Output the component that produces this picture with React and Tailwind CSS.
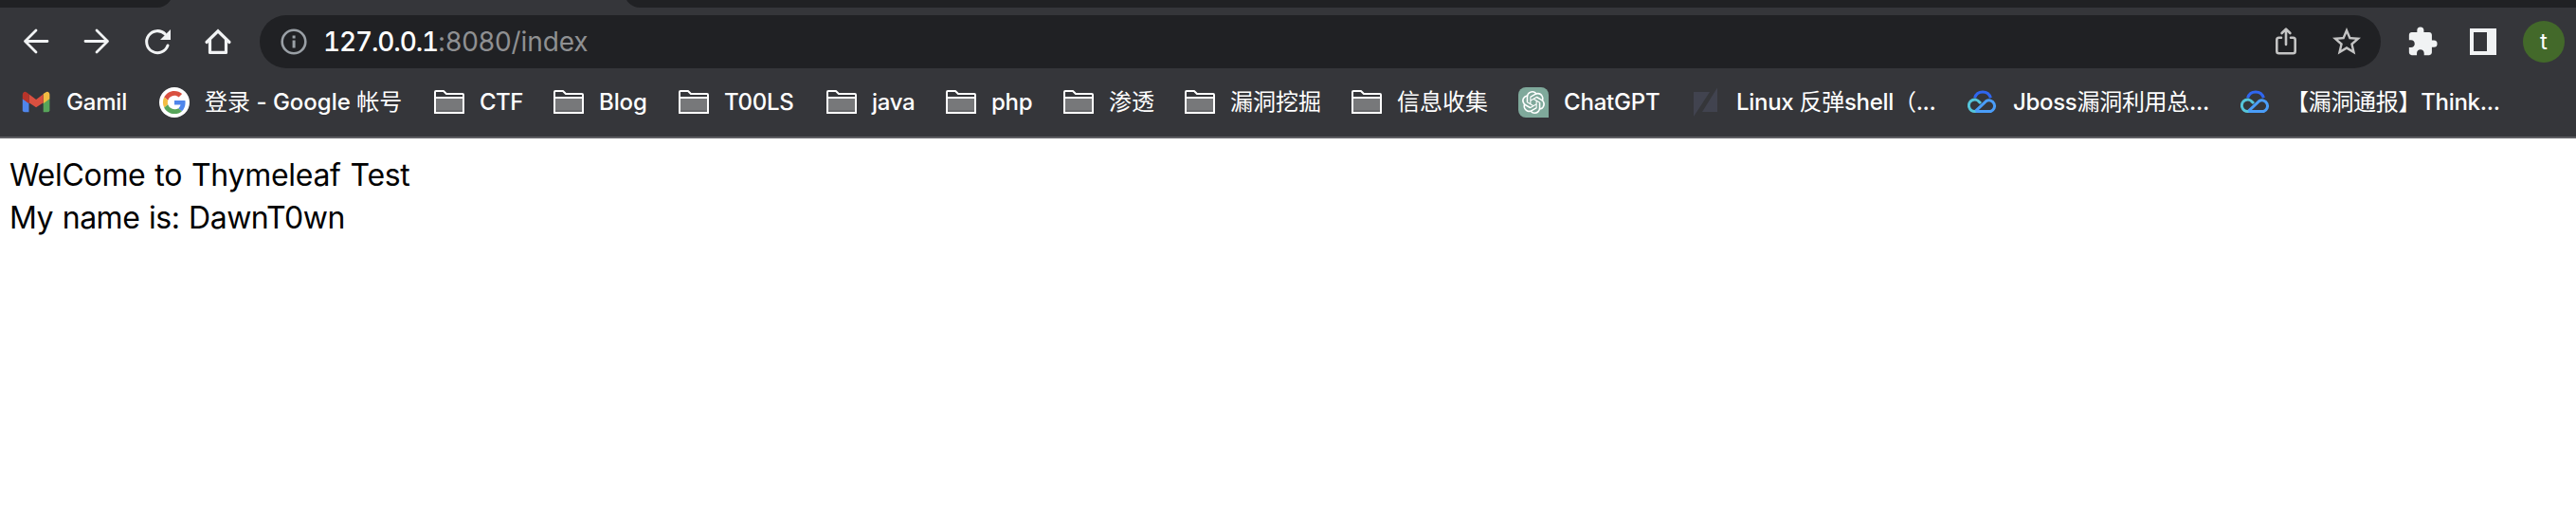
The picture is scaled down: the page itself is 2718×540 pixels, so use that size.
import React from "react";
import { SiOpenai } from "react-icons/si";
import { MdExtension, MdStarBorder } from "react-icons/md";

function BackIcon() {
  return (
    <svg viewBox="0 0 32 32" className="size-8" fill="none" stroke="#f1f3f4" strokeWidth="2.8" strokeLinecap="round" strokeLinejoin="round">
      <path d="M28 15.5H4.6M16 4L4.5 15.5L16 27" />
    </svg>
  );
}

function ForwardIcon() {
  return (
    <svg viewBox="0 0 32 32" className="size-8" fill="none" stroke="#f1f3f4" strokeWidth="2.8" strokeLinecap="round" strokeLinejoin="round">
      <path d="M4 15.5H27.4M16 4L27.5 15.5L16 27" />
    </svg>
  );
}

function ReloadIcon() {
  return (
    <svg viewBox="0 0 32 32" className="size-8" fill="none">
      <path d="M27 20A11.5 11.5 0 1 1 24.2 7.9" stroke="#f1f3f4" strokeWidth="3" strokeLinecap="round" />
      <path d="M30 3V14H19Z" fill="#f1f3f4" />
    </svg>
  );
}

function HomeIcon() {
  return (
    <svg viewBox="0 0 32 32" className="size-8" fill="none" stroke="#f1f3f4" strokeWidth="3.2">
      <path d="M4 16.5L16 4.8L28 16.5" strokeLinejoin="miter" strokeLinecap="round" />
      <path d="M7.5 14V27.4H24.5V14" strokeLinejoin="round" />
    </svg>
  );
}

function InfoIcon() {
  return (
    <svg viewBox="0 0 28 28" className="size-7" fill="none">
      <circle cx="14" cy="14" r="12.3" stroke="#9aa0a6" strokeWidth="2.6" />
      <path d="M12.6 7.6h3v3h-3zM12.6 12.6h3v8h-3z" fill="#9aa0a6" />
    </svg>
  );
}

function ShareIcon() {
  return (
    <svg viewBox="0 0 32 32" className="size-8" fill="none" stroke="#c4c4c4" strokeWidth="2.6" strokeLinecap="round">
      <path d="M11 11.8H8.5Q6.3 11.8 6.3 14V26Q6.3 28.2 8.5 28.2H23.5Q25.7 28.2 25.7 26V14Q25.7 11.8 23.5 11.8H21" />
      <path d="M16 19V3M11.6 7L16 2.6L20.4 7" strokeLinejoin="round" />
    </svg>
  );
}

function PanelIcon() {
  return (
    <svg viewBox="0 0 28 28" className="size-7">
      <path fillRule="evenodd" d="M0 0H28V28H0ZM4 4V24H18V4Z" fill="#f1f3f4" />
    </svg>
  );
}

function GmailIcon() {
  return (
    <svg viewBox="0 0 32 32" className="size-8">
      <path d="M1.8 12L8.5 16.5V26.3H4Q1.8 26.3 1.8 24.2Z" fill="#4f86ec" />
      <path d="M30.4 12L23.7 16.5V26.3H28.2Q30.4 26.3 30.4 24.2Z" fill="#57a55a" />
      <path d="M23.7 7L26 5.5Q28.5 3.8 30 6.2Q30.4 7 30.4 8V12.3L23.7 17.2Z" fill="#f2bd42" />
      <path d="M8.5 7.2L16.1 12.9L23.7 7.2V16.2L16.1 21.2L8.5 16.2Z" fill="#d95040" />
      <path d="M1.8 12.3V8Q1.8 6 3.3 5.1Q4.8 4.4 6.2 5.5L8.5 7.2V17.2Z" fill="#b8342a" />
    </svg>
  );
}

function GoogleIcon() {
  return (
    <svg viewBox="0 0 32 32" className="size-8">
      <circle cx="16" cy="16" r="16" fill="white" />
      <g transform="translate(3.9 3.9) scale(0.504)">
        <path fill="#d95040" d="M24 9.5c3.54 0 6.71 1.22 9.21 3.6l6.85-6.85C35.9 2.38 30.47 0 24 0 14.62 0 6.51 5.38 2.56 13.22l7.98 6.19C12.43 13.72 17.74 9.5 24 9.5z" />
        <path fill="#4f86ec" d="M46.98 24.55c0-1.57-.15-3.09-.38-4.55H24v9.02h12.94c-.58 2.96-2.26 5.48-4.78 7.18l7.73 6c4.51-4.18 7.09-10.36 7.09-17.65z" />
        <path fill="#f2bd42" d="M10.53 28.59c-.48-1.45-.76-2.99-.76-4.59s.27-3.14.76-4.59l-7.98-6.19C.92 16.46 0 20.12 0 24c0 3.88.92 7.54 2.56 10.78l7.97-6.19z" />
        <path fill="#57a55a" d="M24 48c6.48 0 11.93-2.13 15.89-5.81l-7.73-6c-2.15 1.45-4.92 2.3-8.16 2.3-6.26 0-11.57-4.22-13.47-9.91l-7.98 6.19C6.51 42.62 14.62 48 24 48z" />
      </g>
    </svg>
  );
}

function FolderIcon() {
  return (
    <svg viewBox="0 0 32 32" className="size-8" stroke="white" strokeWidth="2" strokeLinejoin="round">
      <path d="M1 11H31V27H1Z" fill="#77787a" />
      <path d="M2 25H30" stroke="#66676a" />
      <path d="M1 27V5Q1 4 2 4H10L13 7H30Q31 7 31 8V27Z" fill="none" />
    </svg>
  );
}

function ChatIcon() {
  return (
    <span className="flex size-8 items-center justify-center rounded-l-lg rounded-tr-lg bg-[#7fa99b]">
      <SiOpenai className="size-6 text-white" />
    </span>
  );
}

function SlashIcon() {
  return (
    <svg viewBox="0 0 32 32" className="size-8" fill="#41434f">
      <path d="M3 5H20L3 31ZM28 .5V26H12Z" />
    </svg>
  );
}

function CloudIcon() {
  return (
    <svg viewBox="0 0 32 32" className="size-8" fill="none" strokeWidth="3">
      <path d="M7.6 11.2A8.8 8.8 0 0 1 24.4 11.2" stroke="#2f66f0" />
      <path d="M14 17L12.7 15.8A6.2 6.2 0 1 0 8.2 25.5H10" stroke="#55c5da" />
      <path d="M8.5 25.5H24.5A6 6 0 1 0 19.6 14.6L8.5 25.2" stroke="#4a9df8" />
    </svg>
  );
}

const bookmarks = [
  { label: "Gamil", Icon: GmailIcon, box: "w-[146px]", track: "tracking-[-0.2px]" },
  { label: "登录 - Google 帐号", Icon: GoogleIcon, box: "w-[290px]", track: "tracking-[0px]" },
  { label: "CTF", Icon: FolderIcon, box: "w-[126px]", track: "tracking-[-0.5px]" },
  { label: "Blog", Icon: FolderIcon, box: "w-[132px]", track: "tracking-[-0.1px]" },
  { label: "T00LS", Icon: FolderIcon, box: "w-[156px]", track: "tracking-[-0.3px]" },
  { label: "java", Icon: FolderIcon, box: "w-[126px]", track: "tracking-[-0.3px]" },
  { label: "php", Icon: FolderIcon, box: "w-[124px]", track: "tracking-[-0.3px]" },
  { label: "渗透", Icon: FolderIcon, box: "w-[128px]", track: "tracking-[0px]" },
  { label: "漏洞挖掘", Icon: FolderIcon, box: "w-[176px]", track: "tracking-[0px]" },
  { label: "信息收集", Icon: FolderIcon, box: "w-[176px]", track: "tracking-[0px]" },
  { label: "ChatGPT", Icon: ChatIcon, box: "w-[182px]", track: "tracking-[-0.2px]" },
  { label: "Linux 反弹shell（...", Icon: SlashIcon, box: "w-[292px]", track: "tracking-[-0.3px]" },
  { label: "Jboss漏洞利用总...", Icon: CloudIcon, box: "w-[288px]", track: "tracking-[-0.3px]" },
  { label: "【漏洞通报】Think...", Icon: CloudIcon, box: "w-[290px]", track: "tracking-[-0.3px]" },
];

// Chinese runs are set one weight lighter than the Latin ones.
function Label({ text }) {
  return text.split(/([\u3000-\u9fff\uff00-\uffef]+)/).map((run, i) =>
    i % 2 ? <span key={i} className="font-normal">{run}</span> : run
  );
}

export default function App() {
  return (
    <div className="flex h-[540px] w-[2718px] flex-col overflow-hidden bg-white font-['Inter','Noto_Sans_CJK_SC',sans-serif]">
      <header className="flex h-[146px] flex-col border-b-2 border-[#5f5f64] bg-[#35363a]">
        <div className="flex h-2 justify-between overflow-hidden">
          <div className="flex h-2 w-[182px] items-end overflow-hidden">
            <div className="h-8 w-[182px] shrink-0 rounded-br-[16px] bg-[#202124]" />
          </div>
          <div className="flex h-2 w-[2059px] items-end overflow-hidden">
            <div className="h-8 w-[2059px] shrink-0 rounded-bl-[16px] bg-[#202124]" />
          </div>
        </div>
        <nav className="mt-2 flex h-14 items-center pl-[22px]">
          <div className="flex w-[252px] shrink-0 items-center gap-8">
            <BackIcon />
            <ForwardIcon />
            <ReloadIcon />
            <HomeIcon />
          </div>
          <div className="flex h-14 w-[2238px] shrink-0 items-center rounded-full bg-[#202124] pl-[22px] pr-[18px]">
            <InfoIcon />
            <div className="ml-[17px] flex-1 whitespace-nowrap text-[28px] leading-none text-[#8f9092]">
              <span className="font-medium tabular-nums tracking-[-1.15px] text-white">127.0.0.1</span>
              <span className="tracking-[-0.1px]">:8080/index</span>
            </div>
            <ShareIcon />
            <MdStarBorder className="ml-[30px] size-[36px] text-[#c4c4c4]" />
          </div>
          <MdExtension className="ml-[27px] size-[34px] shrink-0 text-[#f1f3f4]" />
          <div className="ml-[33px] shrink-0"><PanelIcon /></div>
          <div className="ml-7 flex size-11 shrink-0 items-center justify-center rounded-full bg-[#43692a] text-2xl leading-none text-white">t</div>
        </nav>
        <div className="flex h-[72px] items-center pl-[22px]">
          {bookmarks.map(({ label, Icon, box, track }) => (
            <div key={label} className={`flex shrink-0 items-center gap-4 ${box}`}>
              <Icon />
              <span className={`whitespace-nowrap text-2xl leading-8 font-medium text-white ${track}`}>
                <Label text={label} />
              </span>
            </div>
          ))}
        </div>
      </header>
      <main className="px-2.5 pt-[16px] text-[32px] leading-[45px] text-black">
        <p className="tracking-[-0.3px] [word-spacing:1.2px]">WelCome to Thymeleaf Test</p>
        <p className="tracking-[-0.5px] [word-spacing:1.2px]">My name is: DawnT0wn</p>
      </main>
    </div>
  );
}
